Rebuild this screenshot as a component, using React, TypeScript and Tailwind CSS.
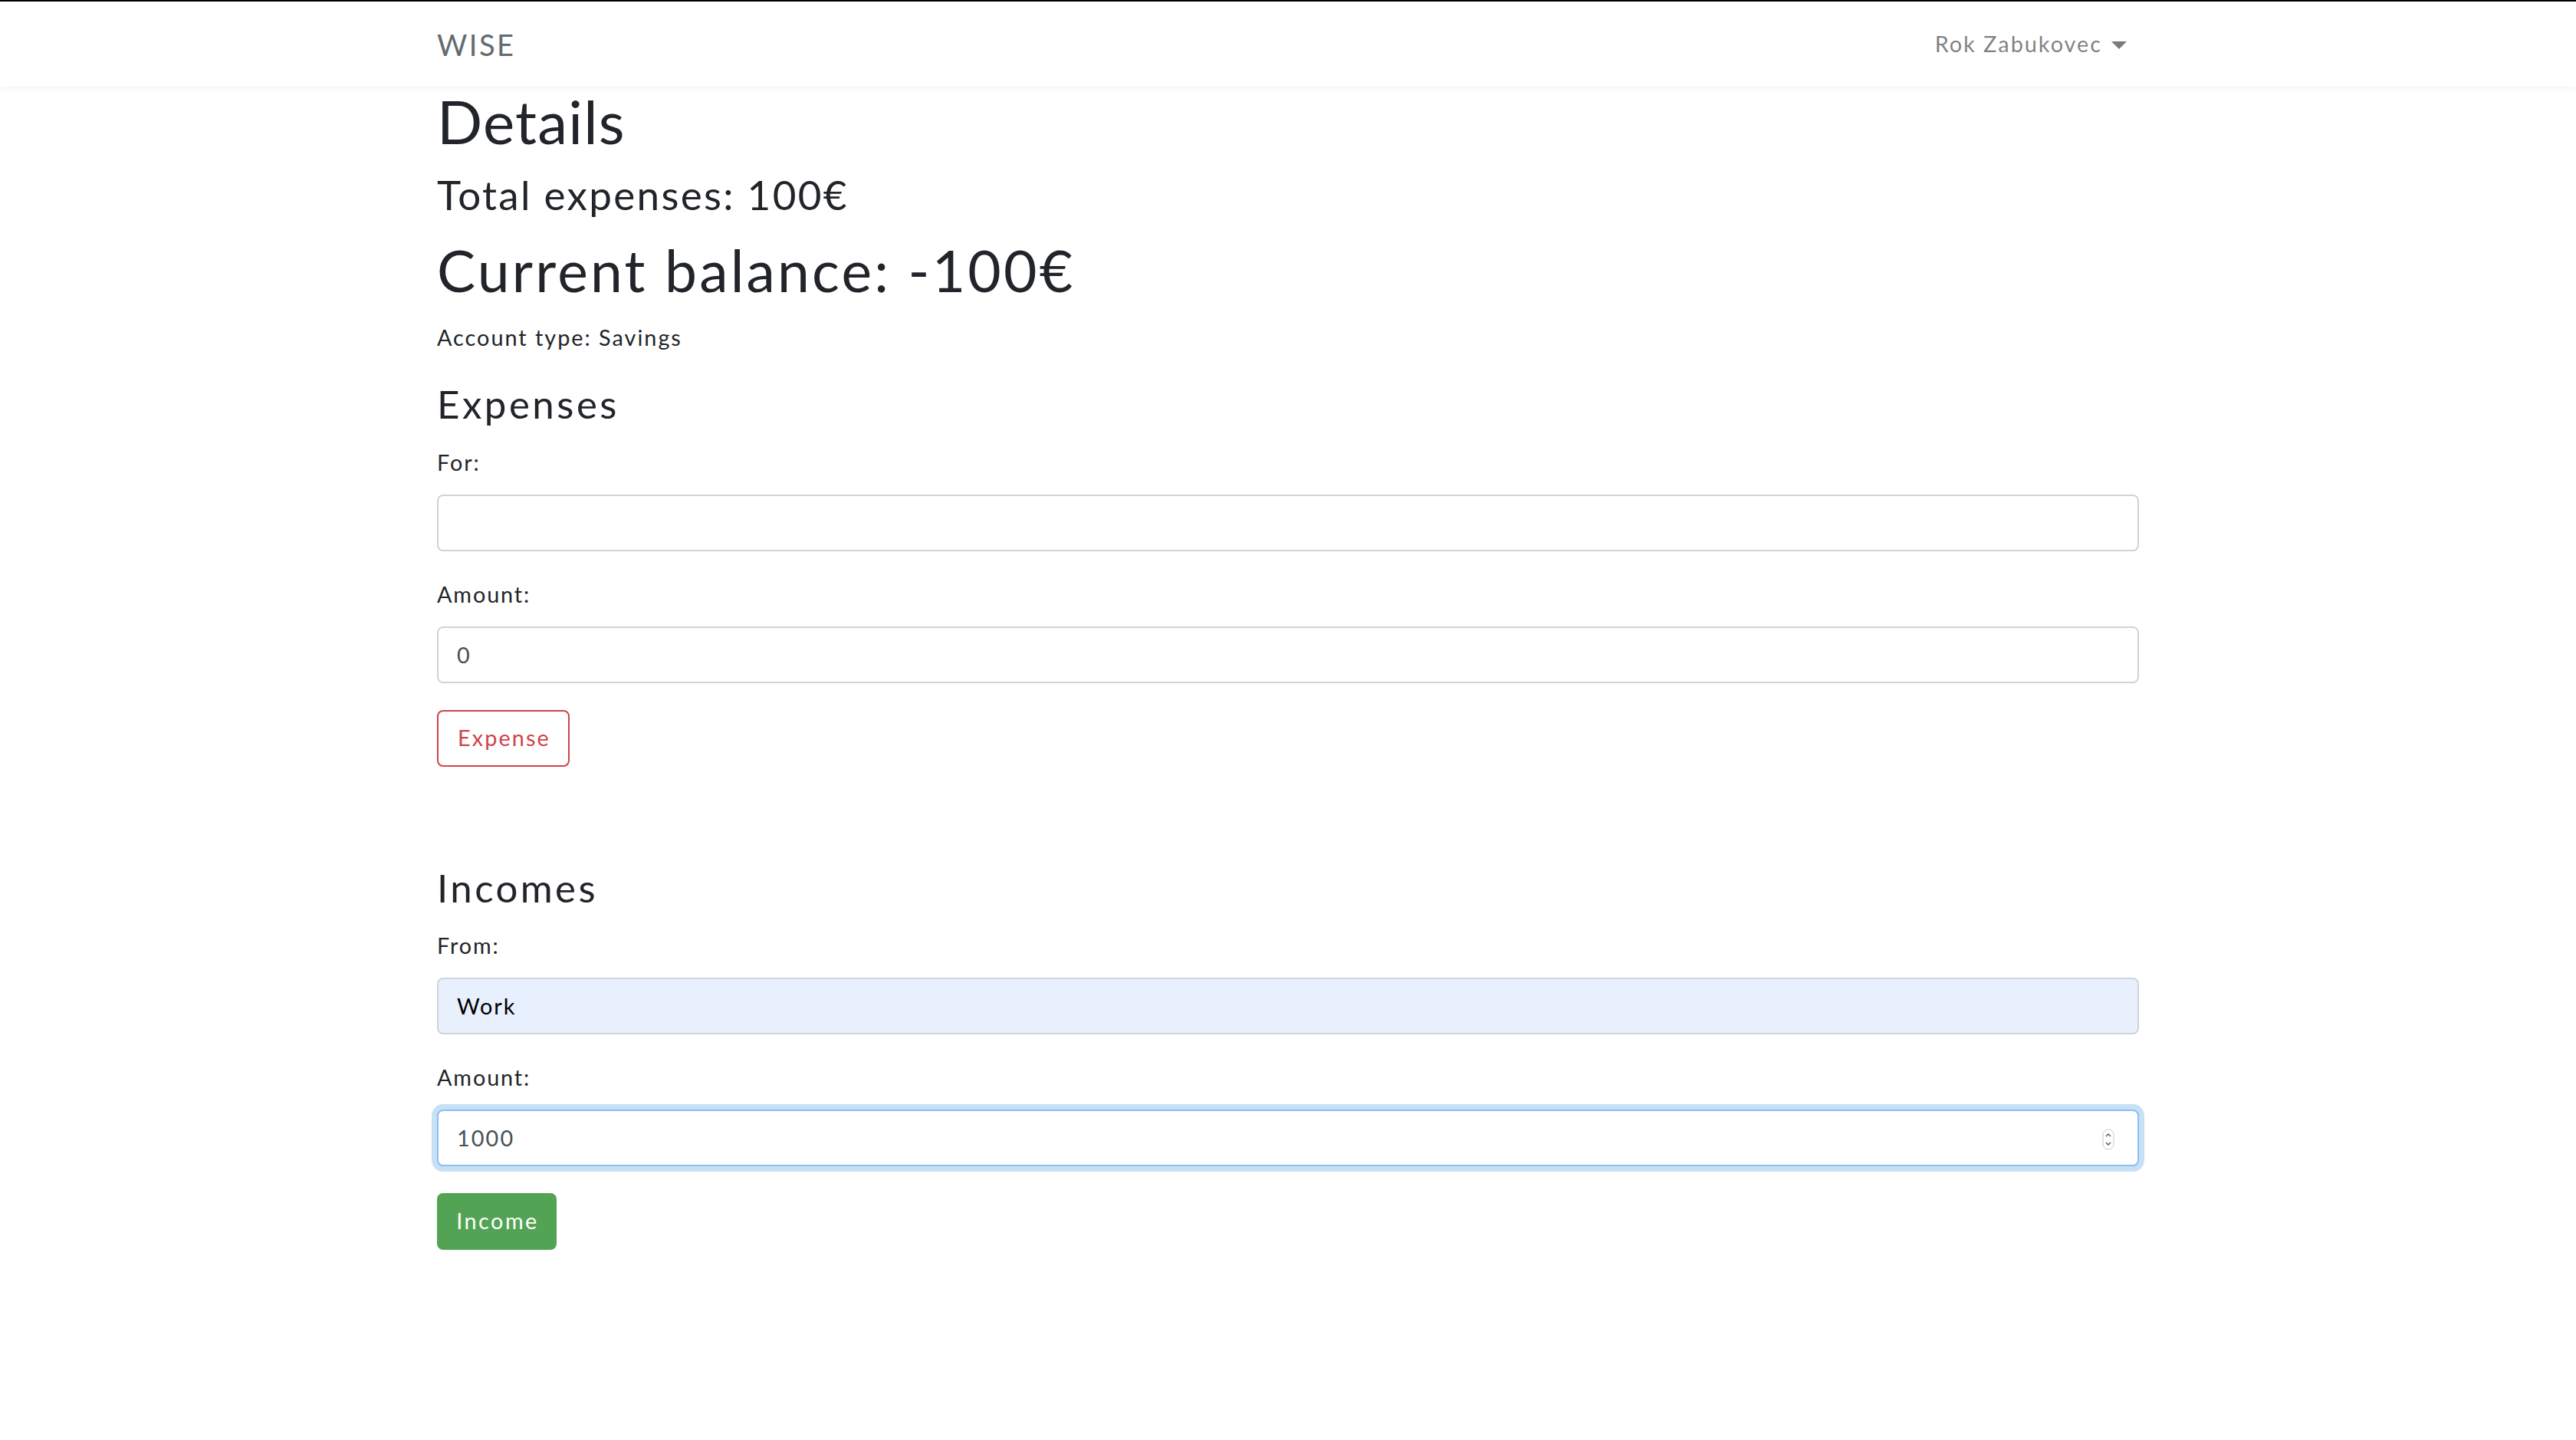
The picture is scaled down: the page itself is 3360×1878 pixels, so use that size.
import React from "react";

function Label({ children, className = "" }: { children: React.ReactNode; className?: string }) {
  return (
    <div className={"text-[28.8px] leading-[46px] tracking-[1.9px] text-[#212529] " + className}>{children}</div>
  );
}

export default function App() {
  return (
    <div className="min-h-screen bg-white font-['Lato','Noto_Sans',sans-serif] text-[#212529]">
      <div className="h-[2px] bg-black" />
      <nav className="h-[111px] bg-white shadow-[0_4px_8px_rgba(0,0,0,0.04)]">
        <div className="mx-auto flex h-full w-[2220px] items-center justify-between">
          <span className="text-[38px] leading-none tracking-[2.5px] text-[#636b6f]">WISE</span>
          <div className="flex items-center pr-[16px] text-[28.8px] tracking-[2px] text-black/50">
            <span>Rok Zabukovec</span>
            <span className="ml-[12px] mt-[2px] h-0 w-0 border-x-[10px] border-t-[10px] border-x-transparent border-t-[#7a7a7a]" />
          </div>
        </div>
      </nav>
      <main className="mx-auto w-[2220px]">
        <h1 className="text-[78px] leading-[90px] tracking-[1.2px]">Details</h1>
        <h3 className="mt-[19px] text-[53px] leading-[64px] tracking-[2.3px]">Total expenses: 100€</h3>
        <h1 className="mt-[21px] text-[75px] leading-[90px] tracking-[3.2px]">Current balance: -100€</h1>
        <p className="mt-[20px] text-[28.8px] leading-[46px] tracking-[2px]">Account type: Savings</p>

        <h3 className="mt-[33px] text-[51px] leading-[62px] tracking-[3.5px]">Expenses</h3>
        <Label className="mt-[22px]">For:</Label>
        <input
          readOnly
          value=""
          className="mt-[19px] block h-[74px] w-full rounded-[8px] border-2 border-[#ced4da] bg-white px-[24px] text-[28.8px] tracking-[2px] text-[#495057] outline-none"
        />
        <Label className="mt-[33px]">Amount:</Label>
        <input
          readOnly
          value="0"
          className="mt-[19px] block h-[74px] w-full rounded-[8px] border-2 border-[#ced4da] bg-white px-[24px] text-[28.8px] tracking-[2px] text-[#495057] outline-none"
        />
        <button className="mt-[35px] flex h-[74px] w-[173px] items-center justify-center rounded-[8px] border-2 border-[#d0434b] bg-white pl-[2px] text-[28.8px] tracking-[2.1px] text-[#d0434b]">
          Expense
        </button>

        <h3 className="mt-[127px] text-[51px] leading-[62px] tracking-[3.4px]">Incomes</h3>
        <Label className="mt-[21px]">From:</Label>
        <input
          readOnly
          value="Work"
          className="mt-[19px] block h-[74px] w-full rounded-[8px] border-2 border-[#ced4da] bg-[#e8f0fe] px-[24px] text-[28.8px] tracking-[1.9px] text-black outline-none"
        />
        <Label className="mt-[33px]">Amount:</Label>
        <div className="relative mt-[19px]">
          <input
            readOnly
            value="1000"
            className="block h-[74px] w-full rounded-[8px] border-2 border-[#8fbdf0] bg-white px-[24px] text-[28.8px] tracking-[2.1px] text-[#495057] shadow-[0_0_0_7px_rgba(52,144,220,0.28)] outline-none"
          />
          <svg
            className="absolute right-[32px] top-[25px]"
            width="16"
            height="28"
            viewBox="0 0 16 28"
          >
            <rect x="1" y="1" width="14" height="26" rx="7" fill="#fff" stroke="#c8c8c8" strokeWidth="1" />
            <path d="M5 10 L8 7 L11 10" fill="none" stroke="#555" strokeWidth="1.4" />
            <path d="M5 18 L8 21 L11 18" fill="none" stroke="#555" strokeWidth="1.4" />
          </svg>
        </div>
        <button className="mt-[35px] flex h-[74px] w-[156px] items-center justify-center rounded-[8px] bg-[#52a454] pl-[2px] text-[28.8px] tracking-[2.5px] text-white">
          Income
        </button>
      </main>
    </div>
  );
}
